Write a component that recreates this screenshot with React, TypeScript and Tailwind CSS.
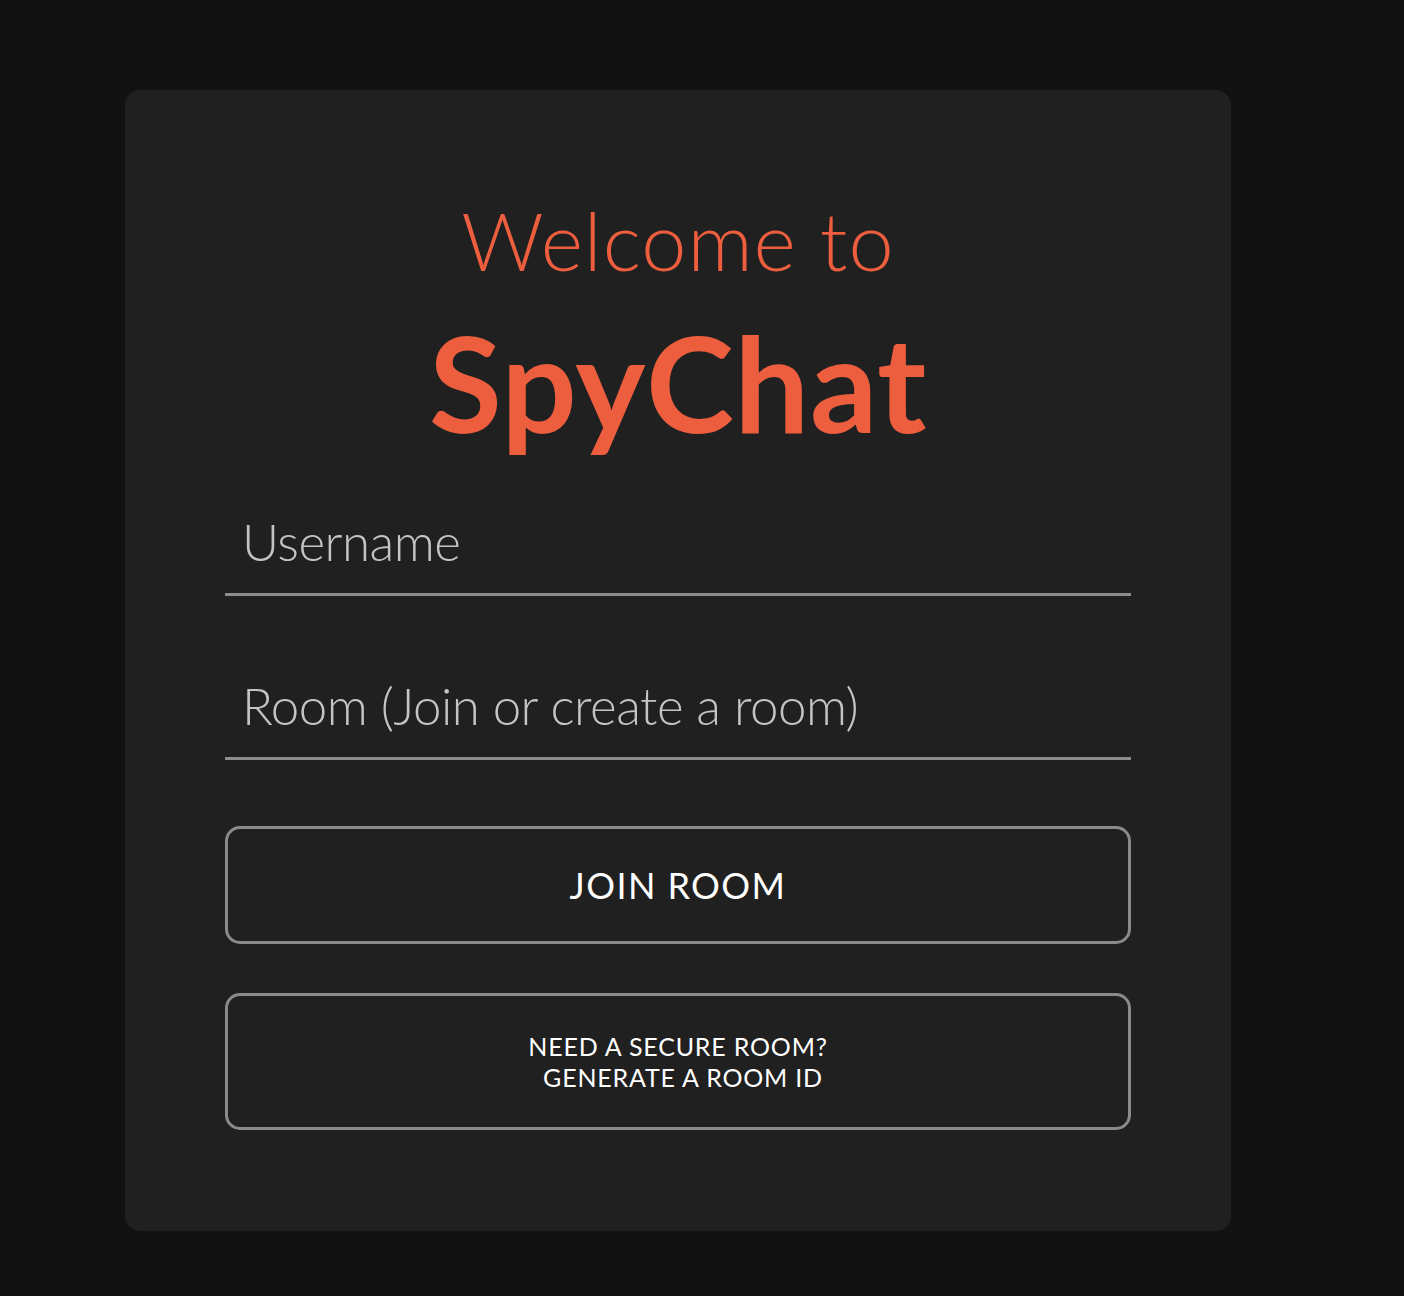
import { useState } from "react";

const FONT = { fontFamily: "Lato, 'Noto Sans', sans-serif" };

export default function App() {
  const [username, setUsername] = useState("");
  const [room, setRoom] = useState("");

  return (
    <div className="min-h-screen w-full bg-[#121212] pt-[90px] pb-[65px]" style={FONT}>
      <div className="ml-[125px] w-[1106px] rounded-[15px] bg-[#202020] px-[100px] pt-[109px] pb-[101px]">
        {/* Titel */}
        <div className="flex flex-col items-center text-[#ed5e3e]">
          <h2 className="text-[81px] leading-none font-light tracking-[1px]">Welcome to</h2>
          <h1 className="mt-[35px] text-[133px] leading-none font-bold tracking-[0.5px]">SpyChat</h1>
        </div>

        {/* Velden */}
        <input
          value={username}
          onChange={(e) => setUsername(e.target.value)}
          placeholder="Username"
          className="mt-[42px] block h-[106px] w-full border-b-[3px] border-[#8c8c8c] bg-transparent pl-[17px] text-[51px] font-light tracking-[-0.5px] text-[#d0d0d0] outline-none placeholder:text-[#c4c4c4]"
        />
        <input
          value={room}
          onChange={(e) => setRoom(e.target.value)}
          placeholder="Room (Join or create a room)"
          className="mt-[58px] block h-[106px] w-full border-b-[3px] border-[#8c8c8c] bg-transparent pl-[17px] text-[51px] font-light tracking-[-0.5px] text-[#d0d0d0] outline-none placeholder:text-[#c4c4c4]"
        />

        {/* Knoppen */}
        <button className="mt-[66px] flex h-[118px] w-full items-center justify-center rounded-[15px] border-[3px] border-[#8a8a8a] bg-transparent text-[36px] leading-none tracking-[1.4px] text-white">
          JOIN ROOM
        </button>
        <button className="mt-[49px] flex h-[137px] w-full flex-col items-center justify-center rounded-[15px] border-[3px] border-[#8a8a8a] bg-transparent text-[25px] leading-[31px] tracking-[0.8px] text-white">
          <span>NEED A SECURE ROOM?</span>
          <span className="pl-[10px]">GENERATE A ROOM ID</span>
        </button>
      </div>
    </div>
  );
}
